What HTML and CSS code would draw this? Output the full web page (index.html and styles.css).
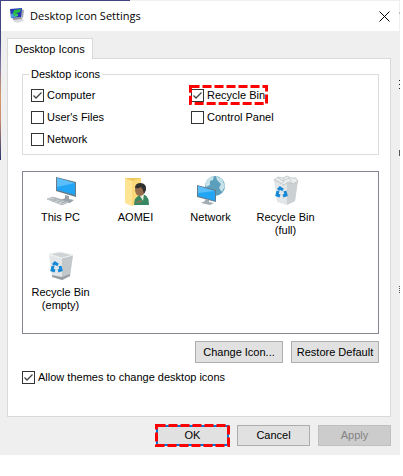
FILE: index.html
```
<!DOCTYPE html>
<html lang="en">
<head>
    <meta charset="UTF-8">
    <meta name="viewport" content="width=device-width, initial-scale=1.0">
    <title>Desktop Icon Settings</title>
    <link rel="stylesheet" href="styles.css">
</head>
<body>
    <div class="desktop">
        <div class="wallpaper"></div>
        <main class="dialog">
            <header class="title-bar">
                <svg class="title-icon" viewBox="0 0 16 16" aria-hidden="true">
                    <path d="M3 10 12 9 14 12 6 14z" fill="#8e959d"/>
                    <path d="M12 1 15 2 14 10 12 9z" fill="#a3a9b0"/>
                    <path d="M1 1 13 0 12 9 2 10z" fill="#2634b5"/>
                    <path d="M2 6 7 4 6 9 2 10z" fill="#4b9be4"/>
                    <path d="M5 2 12 1 11 4 8 5 7 7 5 8 4 5z" fill="#28b84a"/>
                    <path d="M6 6 9 6 9 8 6 9z" fill="#35ce5c"/>
                    <path d="M4 12 13 11 15 13 8 15z" fill="#dcdee1"/>
                </svg>
                <h1>Desktop Icon Settings</h1>
                <button class="close" type="button" aria-label="Close">
                    <svg viewBox="0 0 11 11" aria-hidden="true"><path d="M.5.5 10.5 10.5M10.5.5.5 10.5"/></svg>
                </button>
            </header>

            <form class="content">
                <div class="tabs" role="tablist">
                    <button class="tab" type="button" role="tab" aria-selected="true">Desktop Icons</button>
                </div>
                <section class="panel">
                    <fieldset>
                        <legend>Desktop icons</legend>
                        <div class="options">
                            <label class="check"><input type="checkbox" checked>Computer</label>
                            <label class="check marked"><input type="checkbox" checked>Recycle Bin<svg class="mark" aria-hidden="true"><rect x="1.5" y="1.5"/></svg></label>
                            <label class="check"><input type="checkbox">User's Files</label>
                            <label class="check"><input type="checkbox">Control Panel</label>
                            <label class="check"><input type="checkbox">Network</label>
                        </div>
                    </fieldset>

                    <ul class="icon-list">
                        <li>
                            <svg viewBox="0 0 32 32" aria-hidden="true">
                                <path d="M11 2 31 7 31 22 11 16z" fill="#687b87"/>
                                <path d="M12 3 30 8 30 20 12 15z" fill="#23a5f5"/>
                                <path d="M12 3 30 8 12 12z" fill="#5abefa"/>
                                <path d="M20 20 24 21 24 24 29 25 25 28 16 25 20 23z" fill="#9ba3a8"/>
                                <path d="M2 24 8 22 24 27 17 30z" fill="#d4d8da" stroke="#9aa3a8" stroke-width=".6"/>
                                <path d="M5 24 20 28M8 23 22 27M7 27 12 23M12 28 17 24M16 29 21 26" stroke="#9ba5aa" stroke-width=".7"/>
                            </svg>
                            <span>This PC</span>
                        </li>
                        <li>
                            <svg viewBox="0 0 32 32" aria-hidden="true">
                                <path d="M5 3 21 3 21 27 5 28z" fill="#efc85d"/>
                                <path d="M5 3 12 6 12 31 5 28z" fill="#ffe493"/>
                                <path d="M12 6 21 3 21 27 12 31z" fill="#f9d979"/>
                                <path d="M14 30Q14 22 20 20L25 20Q29 22 29 30z" fill="#388765"/>
                                <path d="M19 19 24 19 23 26z" fill="#f2f1de"/>
                                <ellipse cx="20" cy="15" rx="5" ry="6" fill="#966e4d"/>
                                <path d="M15 13Q15 8 21 8 27 9 26 15L24 19Q23 14 21 12 18 14 15 13z" fill="#30302e"/>
                                <path d="M20 25 15 28 22 27z" fill="#9b704d"/>
                            </svg>
                            <span>AOMEI</span>
                        </li>
                        <li>
                            <svg viewBox="0 0 32 32" aria-hidden="true">
                                <circle cx="20" cy="11" r="10" fill="#5c9fbd"/>
                                <path d="M10 9Q12 2 19 1L18 5 15 6 15 10 11 12zM21 1 27 4 30 11 27 17 24 13 26 9 22 5z" fill="#c6e1e8"/>
                                <path d="M2 10 21 15 21 27 2 22z" fill="#667985"/>
                                <path d="M3 11 20 16 20 26 3 21z" fill="#23a5f5"/>
                                <path d="M3 11 20 16 3 18z" fill="#5abefa"/>
                                <path d="M10 24 14 25 14 27 19 28 15 30 6 28 10 26z" fill="#a2adb3"/>
                            </svg>
                            <span>Network</span>
                        </li>
                        <li>
                            <svg viewBox="0 0 32 32" aria-hidden="true">
                                <path d="M4 5 17 8 28 5 25 26 17 30 7 27z" fill="#e3e6e8"/>
                                <path d="M17 8 28 5 25 26 17 30z" fill="#cbd0d3"/>
                                <path d="M4 5 8 2 13 3 17 1 21 3 26 3 28 6 23 9 18 7 14 10 9 7z" fill="#eceeee" stroke="#aaafb0" stroke-width=".6"/>
                                <path d="M8 3 13 6 19 3 22 8M14 3 13 8" fill="none" stroke="#c9cdcf"/>
                                <g fill="none" stroke="#1688d8" stroke-width="3"><path d="M8 15 10 13 13 15"/><path d="M15 16 16 20 13 21"/><path d="M10 21 7 20 8 16"/></g>
                            </svg>
                            <span>Recycle Bin (full)</span>
                        </li>
                        <li>
                            <svg viewBox="0 0 32 32" aria-hidden="true">
                                <path d="M4 5 17 8 28 5 25 26 17 30 7 27z" fill="#e3e6e8"/>
                                <path d="M17 8 28 5 25 26 17 30z" fill="#c3c8cb"/>
                                <path d="M4 4 15 2 28 5 17 8z" fill="#cdd2d4" stroke="#eef0f0"/>
                                <path d="M7 25 17 27 25 24 25 26 17 30 7 27z" fill="#989fa4"/>
                                <g fill="none" stroke="#1688d8" stroke-width="3"><path d="M8 15 10 13 13 15"/><path d="M15 16 16 20 13 21"/><path d="M10 21 7 20 8 16"/></g>
                            </svg>
                            <span>Recycle Bin (empty)</span>
                        </li>
                    </ul>

                    <div class="actions">
                        <button class="button wide" type="button">Change Icon...</button>
                        <button class="button wide" type="button">Restore Default</button>
                    </div>
                    <label class="check"><input type="checkbox" checked>Allow themes to change desktop icons</label>
                </section>
                <footer class="actions">
                    <button class="button default marked" type="submit">OK<svg class="mark" aria-hidden="true"><rect x="1.5" y="1.5"/></svg></button>
                    <button class="button" type="button">Cancel</button>
                    <button class="button" type="button" disabled>Apply</button>
                </footer>
            </form>
        </main>
        <div class="behind"></div>
    </div>
</body>
</html>
```

FILE: styles.css
```
* {
    box-sizing: border-box;
}

body {
    margin: 0;
    background: #fff;
    color: #000;
    font: 11px/13px "Liberation Sans", Arial, sans-serif;
}

button,
input {
    margin: 0;
    font: inherit;
}

/* slivers of the desktop and the window behind show round the dialog */
.desktop {
    display: grid;
    grid-template-columns: 1px 1fr 1px;
    margin-right: 3px;
    padding-top: 1px;
    background: linear-gradient(#434381, #434381) 0 0 / 130px 1px no-repeat #efefef;
}

.wallpaper {
    height: 159px;
    background: linear-gradient(#434381 0 25%, #7974a0 40%, #d79869 60%, #c68d70 75%, #27346e);
}

.behind {
    background:
        linear-gradient(#bbb, #bbb) 0 11px / 1px 2px no-repeat,
        repeating-linear-gradient(#222 0 1px, #efefef 1px 4px) 0 79px / 1px 9px no-repeat,
        linear-gradient(#555, #555) 0 149px / 1px 6px no-repeat,
        repeating-linear-gradient(#555 0 1px, #efefef 1px 2px) 0 285px / 1px 7px no-repeat;
}

.title-bar {
    display: flex;
    align-items: center;
    height: 30px;
    padding: 0 9px 0 8px;
    background: #fff;
}

.title-icon {
    width: 16px;
    height: 16px;
}

h1 {
    flex: 1;
    margin: 0 0 0 5px;
    font: 11px/16px "Open Sans", "Noto Sans", sans-serif;
}

.close {
    padding: 0;
    border: 0;
    background: none;
}

.close svg {
    display: block;
    width: 11px;
    height: 11px;
    stroke: #000;
}

.content {
    padding: 7px 8px 9px 6px;
}

.tabs {
    display: flex;
}

.tab {
    z-index: 1;
    height: 21px;
    margin-bottom: -1px;
    padding: 0 7px;
    border: 1px solid #d9d9d9;
    border-bottom: 0;
    background: #fff;
    color: inherit;
}

.panel {
    padding: 9px 11px 32px 14px;
    border: 1px solid #d9d9d9;
    background: #fff;
}

fieldset {
    min-width: 0;
    margin: 0;
    padding: 8px;
    border: 1px solid #dcdcdc;
}

legend {
    margin-left: -2px;
    padding: 0 2px;
}

.options {
    display: grid;
    grid-template-columns: 160px 1fr;
    row-gap: 9px;
}

.check {
    display: flex;
    align-items: center;
    gap: 3px;
    justify-self: start;
}

.check input {
    appearance: none;
    width: 13px;
    height: 13px;
    border: 1px solid #333;
    background: #fff;
}

.check input:checked {
    background: url("data:image/svg+xml,%3Csvg xmlns='http://www.w3.org/2000/svg' viewBox='0 0 11 11'%3E%3Cpath d='M1.5 5.5 4 8 9.5 2.5' fill='none' stroke='%23444' stroke-width='1.3'/%3E%3C/svg%3E") center / 11px no-repeat;
}

/* red dashed highlight */
.marked {
    position: relative;
}

.mark {
    position: absolute;
    top: -4px;
    left: -2px;
    width: calc(100% + 5px);
    height: calc(100% + 7px);
    pointer-events: none;
}

.mark rect {
    width: calc(100% - 3px);
    height: calc(100% - 3px);
    fill: none;
    stroke: #f00;
    stroke-width: 3px;
    stroke-dasharray: 9 3;
}

.icon-list {
    display: grid;
    grid-template-columns: repeat(auto-fill, 75px);
    row-gap: 13px;
    margin: 16px 0 7px;
    padding: 3px 0 21px;
    border: 1px solid #828790;
    list-style: none;
    text-align: center;
}

.icon-list li {
    display: flex;
    flex-direction: column;
    align-items: center;
    gap: 4px;
    min-height: 62px;
}

.icon-list svg {
    width: 32px;
    height: 32px;
}

.icon-list span {
    max-width: 65px;
}

.actions {
    display: flex;
    justify-content: flex-end;
    gap: 8px;
    margin-bottom: 8px;
}

.button {
    width: 73px;
    height: 22px;
    padding: 0;
    border: 1px solid #adadad;
    background: #e1e1e1;
    color: #000;
}

.wide {
    width: 88px;
}

.button:disabled {
    border-color: #bfbfbf;
    background: #ccc;
    color: #838383;
}

.default {
    border: 2px solid #0078d7;
}

.default .mark {
    inset: -3px;
    width: calc(100% + 6px);
    height: calc(100% + 6px);
}

footer.actions {
    margin: 8px 0 0;
}

footer .button {
    height: 21px;
}
```
